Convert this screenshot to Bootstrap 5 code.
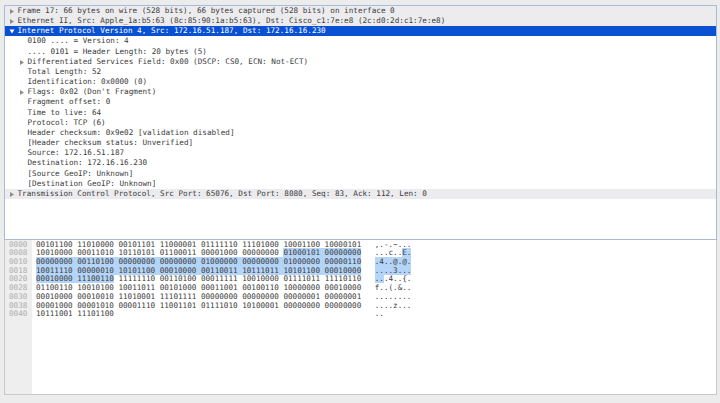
<!DOCTYPE html>
<html lang="en">
<head>
<meta charset="utf-8">
<title>Packet details</title>
<link rel="stylesheet" href="https://cdn.jsdelivr.net/npm/bootstrap@5.3.0/dist/css/bootstrap.min.css">
<style>
html,body{height:100%;overflow:hidden}
body{background:#ececec;color:#3c3c3c;font-family:"DejaVu Sans Mono",monospace;font-size:7.65px;line-height:10.17px}
.shell{height:403px;padding:5px 3px 8px 3.5px}
.pane-tree{height:235px;background:#fff;border:1px solid #a9bbd6;border-bottom-width:1.5px}
.pane-hex{height:155px;background:#fff;border:1px solid #c9c9cb;border-top:0;font-size:7.62px}
.t-row{height:10.17px;padding-left:13px;position:relative;white-space:pre}
.t-row.sub{padding-left:23px}
.t-row.grey{background:#ececee}
.t-row.sel{background:#0a50d2;color:#fff}
.tw{position:absolute;left:4px;top:3px;width:6px;height:5px;fill:#8d8d8d}
.sub .tw{left:14.5px}
.sel .tw{fill:#fff}
.gutter{width:27.5px;background:#eeeeee;color:#adadad;padding:0 0 0 4.5px;line-height:8.72px}
.bytes{padding-left:4px;line-height:8.72px}
.h-row{height:8.72px;white-space:pre}
.hl{background:#b5d5f8}
.asc{margin-left:13.5px}
.col-wrap{padding-top:.5px}
</style>
<script src="https://cdn.jsdelivr.net/npm/bootstrap@5.3.0/dist/js/bootstrap.bundle.min.js"></script>
</head>
<body>
<div class="shell d-flex flex-column">
  <div class="pane-tree">
    <div class="t-row grey"><svg class="tw" viewBox="0 0 6 5"><path d="M1 0 5 2.5 1 5z"/></svg>Frame 17: 66 bytes on wire (528 bits), 66 bytes captured (528 bits) on interface 0</div>
    <div class="t-row grey"><svg class="tw" viewBox="0 0 6 5"><path d="M1 0 5 2.5 1 5z"/></svg>Ethernet II, Src: Apple_1a:b5:63 (8c:85:90:1a:b5:63), Dst: Cisco_c1:7e:e8 (2c:d0:2d:c1:7e:e8)</div>
    <div class="t-row sel"><svg class="tw" viewBox="0 0 6 5"><path d="M.5 .5h5L3 4.5z"/></svg>Internet Protocol Version 4, Src: 172.16.51.187, Dst: 172.16.16.230</div>
    <div class="t-row sub">0100 .... = Version: 4</div>
    <div class="t-row sub">.... 0101 = Header Length: 20 bytes (5)</div>
    <div class="t-row sub"><svg class="tw" viewBox="0 0 6 5"><path d="M1 0 5 2.5 1 5z"/></svg>Differentiated Services Field: 0x00 (DSCP: CS0, ECN: Not-ECT)</div>
    <div class="t-row sub">Total Length: 52</div>
    <div class="t-row sub">Identification: 0x0000 (0)</div>
    <div class="t-row sub"><svg class="tw" viewBox="0 0 6 5"><path d="M1 0 5 2.5 1 5z"/></svg>Flags: 0x02 (Don't Fragment)</div>
    <div class="t-row sub">Fragment offset: 0</div>
    <div class="t-row sub">Time to live: 64</div>
    <div class="t-row sub">Protocol: TCP (6)</div>
    <div class="t-row sub">Header checksum: 0x9e02 [validation disabled]</div>
    <div class="t-row sub">[Header checksum status: Unverified]</div>
    <div class="t-row sub">Source: 172.16.51.187</div>
    <div class="t-row sub">Destination: 172.16.16.230</div>
    <div class="t-row sub">[Source GeoIP: Unknown]</div>
    <div class="t-row sub">[Destination GeoIP: Unknown]</div>
    <div class="t-row grey"><svg class="tw" viewBox="0 0 6 5"><path d="M1 0 5 2.5 1 5z"/></svg>Transmission Control Protocol, Src Port: 65076, Dst Port: 8080, Seq: 83, Ack: 112, Len: 0</div>
  </div>
  <div class="pane-hex d-flex">
    <div class="gutter col-wrap">
      <div class="h-row">0000</div><div class="h-row">0008</div><div class="h-row">0010</div><div class="h-row">0018</div><div class="h-row">0020</div><div class="h-row">0028</div><div class="h-row">0030</div><div class="h-row">0038</div><div class="h-row">0040</div>
    </div>
    <div class="bytes col-wrap">
      <div class="h-row">00101100 11010000 00101101 11000001 01111110 11101000 10001100 10000101<span class="asc">,.-.~...</span></div>
      <div class="h-row">10010000 00011010 10110101 01100011 00001000 00000000 <span class="hl">01000101 00000000</span><span class="asc">...c..<span class="hl">E.</span></span></div>
      <div class="h-row"><span class="hl">00000000 00110100 00000000 00000000 01000000 00000000 01000000 00000110</span><span class="asc"><span class="hl">.4..@.@.</span></span></div>
      <div class="h-row"><span class="hl">10011110 00000010 10101100 00010000 00110011 10111011 10101100 00010000</span><span class="asc"><span class="hl">....3...</span></span></div>
      <div class="h-row"><span class="hl">00010000 11100110</span> 11111110 00110100 00011111 10010000 01111011 11110110<span class="asc"><span class="hl">..</span>.4..{.</span></div>
      <div class="h-row">01100110 10010100 10011011 00101000 00011001 00100110 10000000 00010000<span class="asc">f..(.&amp;..</span></div>
      <div class="h-row">00010000 00010010 11010001 11101111 00000000 00000000 00000001 00000001<span class="asc">........</span></div>
      <div class="h-row">00001000 00001010 00001110 11001101 01111010 10100001 00000000 00000000<span class="asc">....z...</span></div>
      <div class="h-row">10111001 11101100                                                      <span class="asc">..</span></div>
    </div>
  </div>
</div>
</body>
</html>
